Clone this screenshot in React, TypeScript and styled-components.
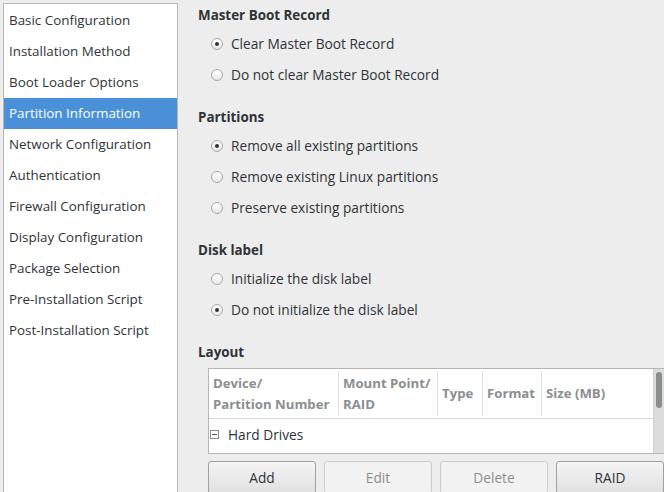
import React from 'react';
import styled, { createGlobalStyle } from 'styled-components';

const GlobalStyle = createGlobalStyle`
  html, body {
    margin: 0;
    padding: 0;
    background: #ededed;
    overflow: hidden;
  }
  body {
    font-family: "Open Sans", "Noto Sans", "DejaVu Sans", sans-serif;
    font-size: 13.7px;
    color: #2e3436;
  }
`;

const Window = styled.div`
  display: flex;
  width: 664px;
  height: 492px;
  overflow: hidden;
  background: #ededed;
`;

const Sidebar = styled.ul`
  list-style: none;
  margin: 3px 0 0 3px;
  padding: 1px 0 0;
  width: 173px;
  height: 520px;
  flex-shrink: 0;
  background: #ffffff;
  border: 1px solid #b6b6b3;
  font-size: 13.4px;
`;

const NavItem = styled.li<{ active?: boolean }>`
  height: 31px;
  line-height: 31px;
  padding-left: 5px;
  white-space: nowrap;
  background: ${({ active }) => (active ? '#4a90d9' : 'transparent')};
  color: ${({ active }) => (active ? '#ffffff' : '#2e3436')};
`;

const Main = styled.div`
  flex: 1;
  display: flex;
  flex-direction: column;
  padding: 6px 0 0 20px;
`;

const Section = styled.section`
  margin-bottom: 18px;
`;

const Heading = styled.div<{ tight?: boolean }>`
  height: 18px;
  line-height: 18px;
  font-weight: bold;
  font-size: 13.4px;
  margin-bottom: ${({ tight }) => (tight ? '0' : '4px')};
`;

const RadioRow = styled.label`
  display: flex;
  align-items: center;
  height: 31px;
  padding-left: 13px;
  gap: 8px;
  white-space: nowrap;
`;

const RadioDot = styled.span<{ checked?: boolean }>`
  position: relative;
  width: 12px;
  height: 12px;
  border-radius: 50%;
  box-sizing: border-box;
  border: 1px solid #a8a8a6;
  background: linear-gradient(#ffffff, #e8e8e7);
  flex-shrink: 0;

  &::after {
    content: '';
    display: ${({ checked }) => (checked ? 'block' : 'none')};
    position: absolute;
    left: 3px;
    top: 3px;
    width: 4px;
    height: 4px;
    border-radius: 50%;
    background: #2e3436;
  }
`;

const LayoutBlock = styled.div`
  margin-left: 10px;
  margin-top: 7px;
  width: 456px;
  display: flex;
  flex-direction: column;
  gap: 7px;
`;

const TableFrame = styled.div`
  display: flex;
  height: 86px;
  box-sizing: border-box;
  border: 1px solid #b6b6b3;
  border-right: none;
  background: #ffffff;
`;

const TableBody = styled.div`
  flex: 1;
  display: flex;
  flex-direction: column;
`;

const HeaderRow = styled.div`
  display: flex;
  height: 49px;
  border-bottom: 1px solid #d8d8d8;
`;

const HeaderCell = styled.div<{ w?: number }>`
  width: ${({ w }) => (w ? `${w}px` : 'auto')};
  flex: ${({ w }) => (w ? '0 0 auto' : '1')};
  box-sizing: border-box;
  display: flex;
  align-items: center;
  padding: 0 4px;
  font-weight: bold;
  font-size: 13.2px;
  color: #8b8e8f;
  line-height: 21px;
  white-space: nowrap;
  border-left: 1px solid #e1e1e1;
  margin: 2px 0;

  &:first-child {
    border-left: none;
  }
`;

const TreeRow = styled.div`
  display: flex;
  align-items: center;
  height: 34px;
  padding-left: 1px;
  gap: 9px;
  margin-top: -2px;
`;

const Expander = styled.span`
  width: 9px;
  height: 9px;
  box-sizing: border-box;
  border: 1px solid #8b8e8f;
  position: relative;

  &::after {
    content: '';
    position: absolute;
    left: 1px;
    right: 1px;
    top: 3px;
    height: 1px;
    background: #555753;
  }
`;

const ScrollTrack = styled.div`
  width: 11px;
  background: #dcdcdc;
  border-left: 1px solid #d0d0d0;
  padding: 3px 2px 0 2px;
  box-sizing: border-box;
`;

const ScrollThumb = styled.div`
  height: 36px;
  border-radius: 4px;
  background: #8b8e8f;
`;

const ButtonRow = styled.div`
  display: grid;
  grid-template-columns: repeat(4, 108px);
  gap: 8px;
`;

const Button = styled.button<{ disabled?: boolean }>`
  height: 33px;
  font-family: inherit;
  font-size: 13.7px;
  border-radius: 3px;
  border: 1px solid ${({ disabled }) => (disabled ? '#cdcdcb' : '#a1a1a1')};
  background: ${({ disabled }) =>
    disabled ? '#f2f2f2' : 'linear-gradient(#f4f4f4, #e1e1e1)'};
  color: ${({ disabled }) => (disabled ? '#8b8e8f' : '#2e3436')};
  padding: 0;
`;

const navItems = [
  'Basic Configuration',
  'Installation Method',
  'Boot Loader Options',
  'Partition Information',
  'Network Configuration',
  'Authentication',
  'Firewall Configuration',
  'Display Configuration',
  'Package Selection',
  'Pre-Installation Script',
  'Post-Installation Script',
];

const groups = [
  {
    title: 'Master Boot Record',
    options: ['Clear Master Boot Record', 'Do not clear Master Boot Record'],
    checked: 0,
  },
  {
    title: 'Partitions',
    options: [
      'Remove all existing partitions',
      'Remove existing Linux partitions',
      'Preserve existing partitions',
    ],
    checked: 0,
  },
  {
    title: 'Disk label',
    options: ['Initialize the disk label', 'Do not initialize the disk label'],
    checked: 1,
  },
];

const App: React.FC = () => {
  return (
    <>
      <GlobalStyle />
      <Window>
        <Sidebar>
          {navItems.map((item) => (
            <NavItem key={item} active={item === 'Partition Information'}>
              {item}
            </NavItem>
          ))}
        </Sidebar>
        <Main>
          {groups.map((g) => (
            <Section key={g.title}>
              <Heading>{g.title}</Heading>
              {g.options.map((opt, i) => (
                <RadioRow key={opt}>
                  <RadioDot checked={i === g.checked} />
                  {opt}
                </RadioRow>
              ))}
            </Section>
          ))}
          <Heading tight>Layout</Heading>
          <LayoutBlock>
            <TableFrame>
              <TableBody>
                <HeaderRow>
                  <HeaderCell w={129}>
                    Device/
                    <br />
                    Partition Number
                  </HeaderCell>
                  <HeaderCell w={99}>
                    Mount Point/
                    <br />
                    RAID
                  </HeaderCell>
                  <HeaderCell w={45}>Type</HeaderCell>
                  <HeaderCell w={59}>Format</HeaderCell>
                  <HeaderCell>Size (MB)</HeaderCell>
                </HeaderRow>
                <TreeRow>
                  <Expander />
                  Hard Drives
                </TreeRow>
              </TableBody>
              <ScrollTrack>
                <ScrollThumb />
              </ScrollTrack>
            </TableFrame>
            <ButtonRow>
              <Button>Add</Button>
              <Button disabled>Edit</Button>
              <Button disabled>Delete</Button>
              <Button>RAID</Button>
            </ButtonRow>
          </LayoutBlock>
        </Main>
      </Window>
    </>
  );
};

export default App;
